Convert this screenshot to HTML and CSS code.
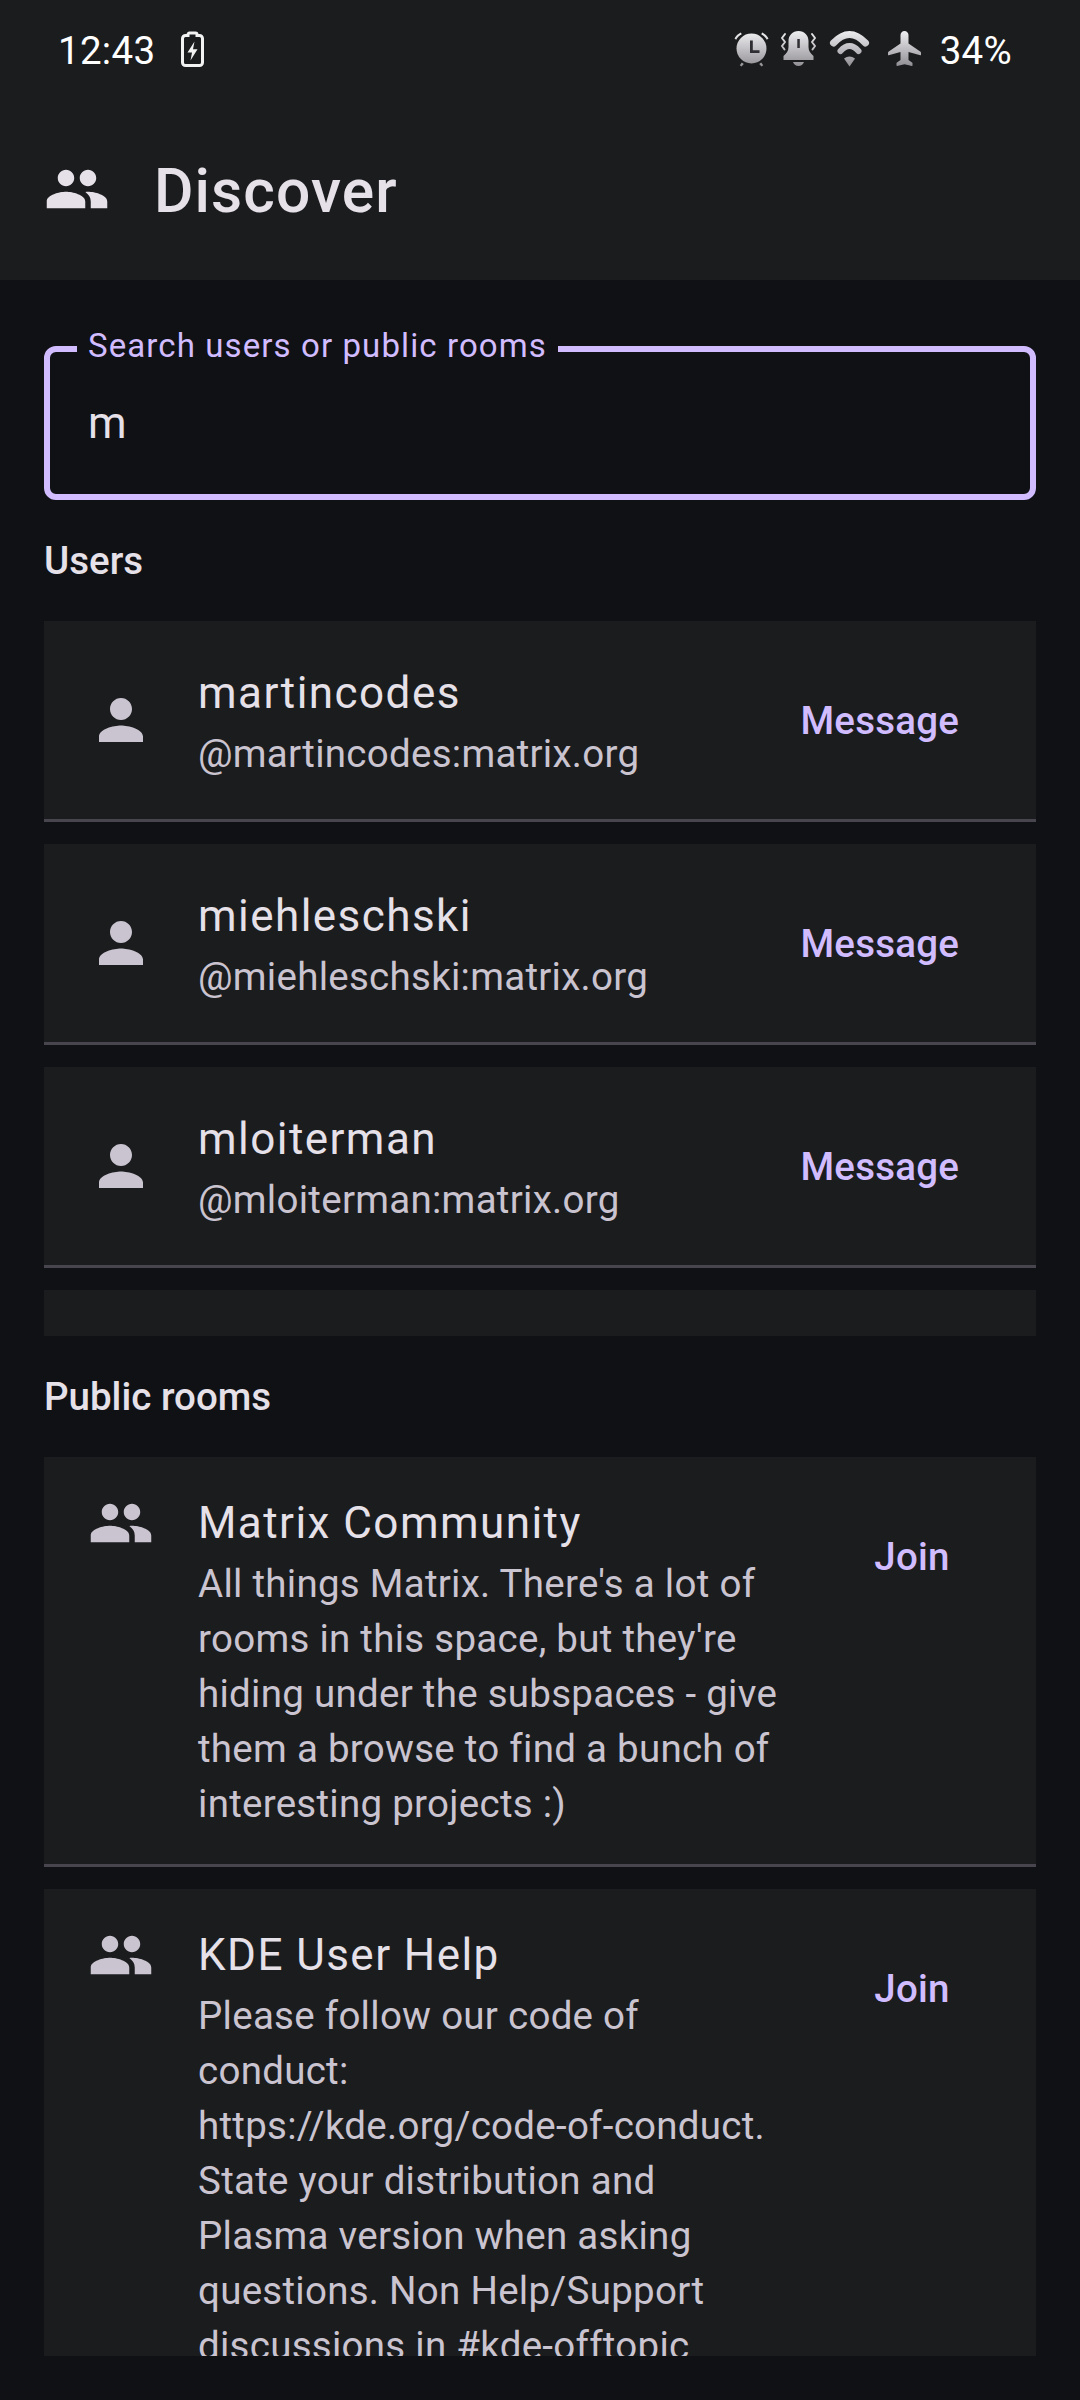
FILE: index.html
```html
<!DOCTYPE html>
<html lang="en">
<head>
<meta charset="utf-8">
<title>Discover</title>
<link rel="stylesheet" href="styles.css">
</head>
<body>
<svg class="defs" width="0" height="0" aria-hidden="true">
  <defs>
    <linearGradient id="fade" gradientUnits="userSpaceOnUse" x1="0" y1="0" x2="0" y2="36">
      <stop offset="0" stop-color="#eeedf0"/>
      <stop offset="1" stop-color="#8f8d92"/>
    </linearGradient>
    <symbol id="group" viewBox="0 0 24 24"><path d="M16 11c1.66 0 2.99-1.34 2.99-3S17.66 5 16 5c-1.66 0-3 1.34-3 3s1.34 3 3 3zm-8 0c1.66 0 2.99-1.34 2.99-3S9.66 5 8 5C6.34 5 5 6.34 5 8s1.34 3 3 3zm0 2c-2.33 0-7 1.17-7 3.5V19h14v-2.5c0-2.33-4.67-3.5-7-3.5zm8 0c-.29 0-.62.02-.97.05 1.16.84 1.97 1.97 1.97 3.45V19h6v-2.5c0-2.33-4.67-3.5-7-3.5z"/></symbol>
    <symbol id="person" viewBox="0 0 24 24"><path d="M12 12c2.21 0 4-1.79 4-4s-1.79-4-4-4-4 1.79-4 4 1.79 4 4 4zm0 2c-2.67 0-8 1.34-8 4v2h16v-2c0-2.66-5.33-4-8-4z"/></symbol>
  </defs>
</svg>
<div class="app">
  <header class="topbar">
    <div class="status">
      <div class="status-left">
        <span class="time">12:43</span>
        <svg class="battery" viewBox="0 0 23 36"><path class="battery-outline" d="M7 4.500V3.500c0-.8.6-1.500 1.500-1.500h6c.9 0 1.500.7 1.500 1.500v1h2.500c1.700 0 3 1.300 3 3v24c0 1.700-1.300 3-3 3h-14c-1.700 0-3-1.300-3-3v-24c0-1.700 1.300-3 3-3z"/><path class="battery-bolt" d="M13.500 10.500 6.500 21.500h4.500L9.500 29.500l7-11.200h-4.500z"/></svg>
      </div>
      <div class="status-right">
        <svg class="s-alarm" viewBox="0 0 34 34"><circle class="fade" cx="17.500" cy="16.500" r="15"/><path class="cut" d="M16 8.500h2.800v9.700h6.700v2.800H16z"/><path class="fade" d="M.5 6.500C1.800 4.200 4 2 6.800.6l1 1.700C5.400 3.600 3.500 5.500 2.200 7.700zM34.500 6.500C33.200 4.200 31 2 28.200.6l-1 1.700c2.400 1.300 4.300 3.200 5.600 5.400zM7.800 30.500l2 1.400-2.300 2.600-1.700-1.200zM27.200 30.500l-2 1.400 2.300 2.600 1.700-1.200z"/></svg>
        <svg class="s-bell" viewBox="0 0 37 36"><path class="fade" d="M18.500 0c-6 0-10 4.500-10 10v6c0 4-2 6-5 9v4h30v-4c-3-3-5-5-5-9v-6c0-5.500-4-10-10-10z"/><path class="cut" d="M17.300 8h2.500v9h-2.500z"/><path class="fade" d="M13 31h11c-1 2.500-3 4-5.500 4s-4.500-1.500-5.500-4z"/><path class="fade-line" d="M5 3 2 7l3 4-3 4 2.500 3.500M32 3l3 4-3 4 3 4-2.500 3.500"/></svg>
        <svg class="s-wifi" viewBox="0 0 41 36"><path class="fade-thick" d="M4.500 12Q20.500-5 36.500 12"/><path class="fade-mid" d="M11.500 20Q20.500 10 29.500 20"/><path class="fade" d="M15 27.500Q20.500 23.500 26 27.500L20.500 35.500z"/></svg>
        <svg class="s-plane" viewBox="0 0 33 36"><path class="fade" d="M16.500 0c-2.200 0-4 1.800-4 4v8.500L.8 20.500c-.5.3-.8.8-.8 1.300v2c0 .4.4.6.700.5L12.500 21v8l-3.500 2.600c-.3.2-.5.5-.5.8v2.100c0 .3.3.5.6.4l7.400-1.600 7.400 1.600c.3.1.6-.1.6-.4v-2.100c0-.3-.2-.6-.5-.8L20.500 29v-8l11.800 3.300c.3.1.7-.1.7-.5v-2c0-.5-.3-1-.8-1.300L20.500 12.500V4c0-2.200-1.800-4-4-4z"/></svg>
        <span class="battery-pct">34%</span>
      </div>
    </div>
    <div class="titlebar">
      <svg class="icon title-icon"><use href="#group"/></svg>
      <h1 class="title">Discover</h1>
    </div>
  </header>

  <main class="content">
    <div class="search">
      <span class="search-label">Search users or public rooms</span>
      <span class="search-value">m</span>
    </div>

    <h2 class="section">Users</h2>
    <ul class="list">
      <li class="row user">
        <svg class="icon"><use href="#person"/></svg>
        <div class="text">
          <div class="name">martincodes</div>
          <div class="sub">@martincodes:matrix.org</div>
        </div>
        <span class="action">Message</span>
      </li>
      <li class="row user">
        <svg class="icon"><use href="#person"/></svg>
        <div class="text">
          <div class="name">miehleschski</div>
          <div class="sub">@miehleschski:matrix.org</div>
        </div>
        <span class="action">Message</span>
      </li>
      <li class="row user">
        <svg class="icon"><use href="#person"/></svg>
        <div class="text">
          <div class="name">mloiterman</div>
          <div class="sub">@mloiterman:matrix.org</div>
        </div>
        <span class="action">Message</span>
      </li>
      <li class="row-empty"></li>
    </ul>

    <h2 class="section">Public rooms</h2>
    <ul class="list rooms">
      <li class="row room">
        <svg class="icon"><use href="#group"/></svg>
        <div class="text">
          <div class="name">Matrix Community</div>
          <div class="sub">All things Matrix. There's a lot of<br>rooms in this space, but they're<br>hiding under the subspaces - give<br>them a browse to find a bunch of<br>interesting projects :)</div>
        </div>
        <span class="action">Join</span>
      </li>
      <li class="row room">
        <svg class="icon"><use href="#group"/></svg>
        <div class="text">
          <div class="name">KDE User Help</div>
          <div class="sub">Please follow our code of<br>conduct:<br>https://kde.org/code-of-conduct.<br>State your distribution and<br>Plasma version when asking<br>questions. Non Help/Support<br>discussions in #kde-offtopic</div>
        </div>
        <span class="action">Join</span>
      </li>
    </ul>
  </main>
</div>
</body>
</html>
```
FILE: styles.css
```css
* { box-sizing: border-box; }
html, body { margin: 0; padding: 0; }
body { background: #101115; font-family: Roboto, "Noto Sans", sans-serif; }
.defs { position: absolute; }
.fade { fill: url(#fade); }
.fade-line { fill: none; stroke: url(#fade); stroke-width: 2; stroke-linejoin: round; stroke-linecap: round; }
.fade-thick { fill: none; stroke: url(#fade); stroke-width: 7; stroke-linecap: round; }
.fade-mid { fill: none; stroke: url(#fade); stroke-width: 6; stroke-linecap: round; }
.cut { fill: #2f2e33; }

.app { width: 1080px; height: 2400px; display: flex; flex-direction: column; overflow: hidden; }

.topbar { height: 280px; background: #1b1c1e; flex: none; display: flex; flex-direction: column; }
.status { height: 100px; display: flex; align-items: center; justify-content: space-between; padding: 0 68px 0 58px; }
.status-left, .status-right { display: flex; align-items: center; }
.time, .battery-pct { color: #fff; font-size: 38.5px; line-height: 50px; letter-spacing: .3px; margin-top: 3px; }
.battery { width: 23px; height: 36px; margin-left: 26px; }
.battery-outline { fill: none; stroke: #f2f2f2; stroke-width: 3; }
.battery-bolt { fill: #f2f2f2; }
.s-alarm { width: 34px; height: 34px; overflow: visible; }
.s-bell { width: 37px; height: 36px; margin-left: 12px; }
.s-wifi { width: 41px; height: 36px; margin-left: 12px; }
.s-plane { width: 33px; height: 36px; margin-left: 18px; }
.battery-pct { margin-left: 19px; }

.titlebar { display: flex; align-items: center; gap: 44px; padding: 0 44px; height: 184px; }
.icon { width: 66px; height: 66px; flex: none; fill: #cac4d0; }
.title-icon { fill: #e6e1e9; }
.title { margin: 5px 0 0; color: #e6e1e9; font-size: 60.5px; line-height: 66px; font-weight: 500; letter-spacing: 1.1px; }

.content { flex: 1; margin: 0 44px 44px; overflow: hidden; min-height: 0; padding-top: 66px; }

.search { position: relative; height: 154px; border: 6px solid #d0bcff; border-radius: 12px; display: flex; align-items: center; padding-left: 38px; }
.search-label { position: absolute; left: 27px; top: -28px; padding: 0 11px; background: #101115; color: #d0bcff; font-size: 33px; line-height: 44px; letter-spacing: 1.100px; white-space: nowrap; }
.search-value { color: #e6e1e9; font-size: 44px; line-height: 66px; letter-spacing: 1.375px; }

.section { margin: 33px 0; color: #e6e1e9; font-size: 38.5px; line-height: 55px; font-weight: 500; letter-spacing: 0; }

.list { list-style: none; margin: 0; padding: 0; display: flex; flex-direction: column; gap: 22px; }
.row { display: flex; gap: 44px; background: #1b1c1e; border-bottom: 3px solid #49454f; padding: 0 44px; }
.user { height: 201px; align-items: center; }
.room { padding-top: 33px; padding-bottom: 33px; align-items: flex-start; }
.row-empty { height: 46px; background: #1b1c1e; }

.text { flex: 1; min-width: 0; }
.name { color: #e6e1e9; font-size: 44px; line-height: 66px; letter-spacing: 1.45px; }
.sub { color: #cac4d0; font-size: 38.5px; line-height: 55px; letter-spacing: .27px; white-space: nowrap; }
.action { flex: none; min-width: 160px; height: 110px; padding: 0 33px; display: flex; align-items: center; justify-content: center; color: #d0bcff; font-size: 38.5px; font-weight: 500; letter-spacing: .2px; }
.room .action { margin-top: 11px; }
```
